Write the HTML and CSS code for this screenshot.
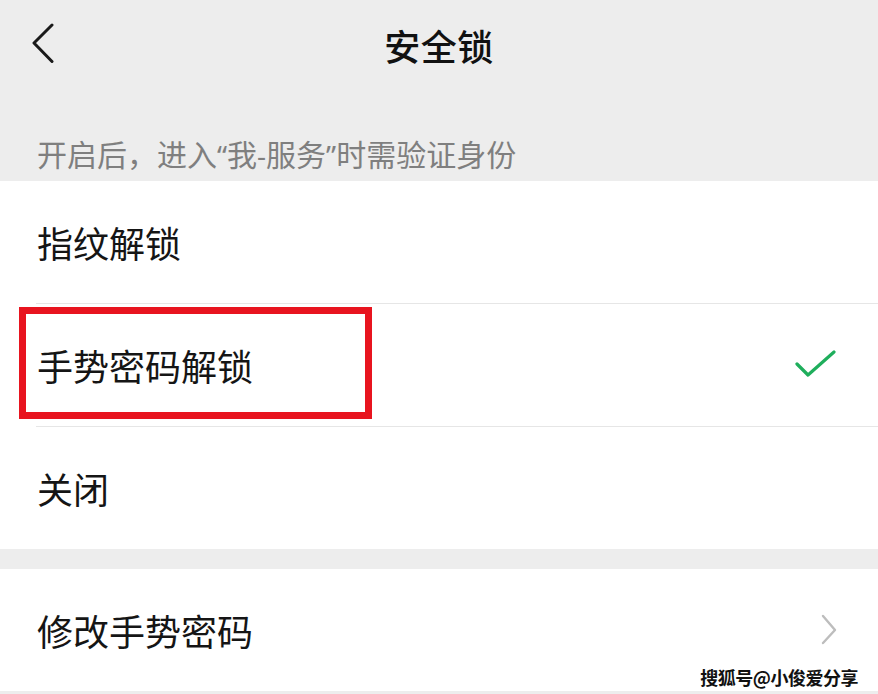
FILE: index.html
```html
<!DOCTYPE html>
<html lang="zh-CN">
<head>
<meta charset="utf-8">
<title>安全锁</title>
<link rel="stylesheet" href="styles.css">
</head>
<body>
<div class="page">
  <header class="nav">
    <span class="back">
      <svg width="24" height="42" viewBox="0 0 24 42"><path d="M21 2 L3 20 L21 38.5" fill="none" stroke="#1a1a1a" stroke-width="3" stroke-linecap="round" stroke-linejoin="round"/></svg>
    </span>
    <h1 class="title">安全锁</h1>
  </header>
  <p class="tip">开启后，进入<span class="latin">“</span>我<span class="latin">-</span>服务<span class="latin">”</span>时需验证身份</p>
  <section class="group">
    <div class="row">指纹解锁</div>
    <div class="row row-selected">
      <span>手势密码解锁</span>
      <svg class="check" width="44" height="30" viewBox="0 0 44 30"><path d="M3 14 L14 25 L40 2" fill="none" stroke="#1fae5c" stroke-width="3.2" stroke-linecap="round" stroke-linejoin="round"/></svg>
      <span class="mark"></span>
    </div>
    <div class="row">关闭</div>
  </section>
  <section class="group group-second">
    <div class="row">
      <span>修改手势密码</span>
      <svg class="chev" width="18" height="32" viewBox="0 0 18 32"><path d="M3 2 L15 16 L3 29" fill="none" stroke="#bdbdbd" stroke-width="2.4" stroke-linecap="round" stroke-linejoin="round"/></svg>
    </div>
  </section>
  <div class="watermark">搜狐号@小俊爱分享</div>
</div>
</body>
</html>
```

FILE: styles.css
```css
* { box-sizing: border-box; }
html, body {
  margin: 0;
  padding: 0;
  background: #ededed;
  font-family: "Noto Sans CJK SC", "Noto Sans", sans-serif;
  color: #1a1a1a;
}
.page {
  position: relative;
  width: 878px;
  height: 694px;
  overflow: hidden;
  background: #ededed;
}
.nav {
  position: relative;
  height: 90px;
  display: flex;
  align-items: center;
  justify-content: center;
}
.back {
  position: absolute;
  left: 31px;
  top: 23px;
  width: 24px;
  height: 42px;
  display: block;
}
.back svg { display: block; }
.title {
  margin: 0;
  font-size: 36px;
  font-weight: 500;
  line-height: 40px;
  color: #111;
  letter-spacing: 0.5px;
}
.tip {
  margin: 0;
  height: 91px;
  padding: 44px 0 0 37px;
  font-size: 30px;
  line-height: 38px;
  color: #7f7f7f;
}
.latin {
  font-family: "Noto Sans", "DejaVu Sans", sans-serif;
  font-size: 28px;
}
.group {
  background: #fff;
}
.group-second {
  margin-top: 20px;
}
.row {
  position: relative;
  height: 122px;
  display: flex;
  align-items: center;
  justify-content: space-between;
  padding: 0 40px 0 37px;
  font-size: 36px;
  line-height: 40px;
  color: #151515;
}
.row + .row::before {
  content: "";
  position: absolute;
  top: -1px;
  left: 36px;
  right: 0;
  height: 1px;
  background: #e6e6e6;
}
.group .row + .row { margin-top: 1px; }
.check { display: block; }
.chev { display: block; }
.mark {
  position: absolute;
  left: 19px;
  top: 3px;
  width: 353px;
  height: 112px;
  border: 7px solid #e8141f;
}
.watermark {
  position: absolute;
  right: 20px;
  bottom: 7px;
  font-size: 18px;
  line-height: 20px;
  font-weight: 700;
  color: #111;
  text-shadow: 0 0 2px #fff, 0 0 2px #fff, 0 0 1px #fff;
  letter-spacing: -0.5px;
}
```
